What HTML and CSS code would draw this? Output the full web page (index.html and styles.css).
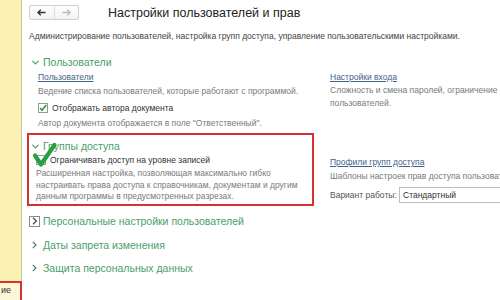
FILE: index.html
```html
<!DOCTYPE html>
<html lang="ru">
<head>
<meta charset="utf-8">
<title>Настройки пользователей и прав</title>
<link rel="stylesheet" href="styles.css">
</head>
<body>
<div class="app">
  <aside class="sidebar">
    <div class="side-item">ие</div>
  </aside>
  <main class="main">
    <header class="topbar">
      <div class="nav">
        <span class="nav-btn"><svg width="9" height="7" viewBox="0 0 9 7"><path d="M8.5 3.5H1.2M3.8 0.8L1 3.5l2.8 2.7" fill="none" stroke="#333" stroke-width="1.4"/></svg></span>
        <span class="nav-btn"><svg width="9" height="7" viewBox="0 0 9 7"><path d="M0.5 3.5h7.3M5.2 0.8L8 3.5 5.2 6.2" fill="none" stroke="#bbb" stroke-width="1.4"/></svg></span>
      </div>
      <h1 class="title">Настройки пользователей и прав</h1>
    </header>
    <p class="intro">Администрирование пользователей, настройка групп доступа, управление пользовательскими настройками.</p>

    <section class="group">
      <div class="group-head"><svg class="chev-down" width="7" height="5" viewBox="0 0 7 5"><path d="M0.5 0.8L3.5 3.8 6.5 0.8" fill="none" stroke="#4a9e6c" stroke-width="1.2"/></svg>Пользователи</div>
      <div class="cols">
        <div class="col-left">
          <a class="link">Пользователи</a>
          <p class="note">Ведение списка пользователей, которые работают с программой.</p>
          <label class="check"><span class="box"><svg width="10" height="10" viewBox="0 0 10 10"><path d="M2 5l2 2.3L8.2 2" fill="none" stroke="#2f9a47" stroke-width="1.6"/></svg></span>Отображать автора документа</label>
          <p class="note note-after">Автор документа отображается в поле "Ответственный".</p>
        </div>
        <div class="col-right">
          <a class="link">Настройки входа</a>
          <p class="note note-tall">Сложность и смена паролей, ограничение<br>пользователей.</p>
        </div>
      </div>
    </section>

    <section class="cols group-row">
      <div class="col-left marked">
        <div class="group-head"><svg class="chev-down" width="7" height="5" viewBox="0 0 7 5"><path d="M0.5 0.8L3.5 3.8 6.5 0.8" fill="none" stroke="#4a9e6c" stroke-width="1.2"/></svg>Группы доступа</div>
        <div class="inner">
          <label class="check check-tight"><span class="box"></span>Ограничивать доступ на уровне записей</label>
          <p class="note note-block">Расширенная настройка, позволяющая максимально гибко<br>настраивать права доступа к справочникам, документам и другим<br>данным программы в предусмотренных разрезах.</p>
        </div>
        <svg class="big-check" width="26" height="28" viewBox="0 0 26 28"><path d="M3 14.5l6 9L22.5 4" fill="none" stroke="#25a043" stroke-width="4.2" stroke-linecap="round" stroke-linejoin="round"/></svg>
      </div>
      <div class="col-right col-right-low">
        <a class="link">Профили групп доступа</a>
        <p class="note">Шаблоны настроек прав доступа пользователей.</p>
        <div class="field-row"><span class="field-label">Вариант работы:</span><span class="field">Стандартный</span></div>
      </div>
    </section>

    <div class="group-head collapsed first-collapsed"><span class="boxed"><svg width="6" height="8" viewBox="0 0 6 8"><path d="M1 0.8L4.4 4 1 7.2" fill="none" stroke="#444" stroke-width="1.2"/></svg></span>Персональные настройки пользователей</div>
    <div class="group-head collapsed"><svg class="chev-right" width="5" height="8" viewBox="0 0 5 8"><path d="M0.8 0.8L4 4 0.8 7.2" fill="none" stroke="#4d7d63" stroke-width="1.2"/></svg>Даты запрета изменения</div>
    <div class="group-head collapsed"><svg class="chev-right" width="5" height="8" viewBox="0 0 5 8"><path d="M0.8 0.8L4 4 0.8 7.2" fill="none" stroke="#4d7d63" stroke-width="1.2"/></svg>Защита персональных данных</div>
  </main>
</div>
</body>
</html>
```

FILE: styles.css
```css
* { box-sizing: border-box; }
html, body {
  margin: 0;
  padding: 0;
  width: 500px;
  height: 300px;
  overflow: hidden;
  background: #fff;
  font-family: "Liberation Sans", Arial, sans-serif;
  color: #444;
}
.app {
  display: flex;
  height: 300px;
}
.sidebar {
  width: 22px;
  flex: none;
  background: #fbf1b3;
  border-right: 1px solid #cfc7a0;
  display: flex;
  flex-direction: column;
  justify-content: flex-end;
}
.side-item {
  height: 21px;
  margin-right: -1px;
  margin-bottom: -2px;
  border: 2px solid #d63232;
  border-left: none;
  background: #fdf7d8;
  font-size: 9px;
  line-height: 15px;
  padding-left: 1px;
  color: #333;
}
.main {
  flex: 1;
  min-width: 0;
  padding: 5px 0 0 5px;
  white-space: nowrap;
}
.topbar {
  display: flex;
  align-items: center;
  height: 15px;
}
.nav {
  display: flex;
  margin-left: 2px;
  width: 50px;
  height: 15px;
  border: 1px solid #d0d0d0;
  border-radius: 2px;
  background: linear-gradient(#fff, #f3f3f3);
}
.nav-btn {
  flex: 1;
  display: flex;
  align-items: center;
  justify-content: center;
}
.nav-btn + .nav-btn { border-left: 1px solid #dcdcdc; }
.title {
  margin: 0 0 0 29px;
  font-size: 12.5px;
  font-weight: normal;
  color: #222;
  line-height: 15px;
  position: relative;
  top: 1px;
}
.intro {
  margin: 10px 0 0 2px;
  font-size: 8.5px;
  line-height: 12px;
  color: #444;
}
.group-head {
  display: flex;
  align-items: center;
  height: 14px;
  font-size: 10.5px;
  color: #4a9e6c;
  padding-left: 5px;
}
.group > .group-head { margin-top: 13px; }
.chev-down { margin-right: 4px; flex: none; }
.chev-right { margin-right: 6px; margin-left: 0; flex: none; }
.cols {
  display: flex;
  gap: 16px;
}
.col-left {
  width: 287px;
  flex: none;
  padding-left: 9px;
  border: 2px solid transparent;
  border-top: none;
  border-bottom: none;
}
.group .cols { margin-top: 2px; }
.group .col-right { padding-left: 0; }
.link {
  display: block;
  font-size: 8.5px;
  line-height: 12px;
  color: #3f5f8c;
  text-decoration: underline;
  text-underline-offset: 1px;
}
.note {
  margin: 2px 0 0;
  font-size: 8.5px;
  line-height: 12px;
  color: #7a7a7a;
}
.note-tall { line-height: 13px; margin-top: 1px; }
.note-after { margin-top: 3px; }
.check {
  display: flex;
  align-items: center;
  height: 12px;
  margin-top: 5px;
  font-size: 8.5px;
  color: #333;
}
.box {
  width: 10px;
  height: 10px;
  flex: none;
  border: 1px solid #9a9a9a;
  background: #fff;
  margin-right: 4px;
  display: flex;
  align-items: center;
  justify-content: center;
}
.box svg { margin: -1px; }
.group-row { margin-top: 4px; }
.marked {
  position: relative;
  border: 2px solid #d63232;
  padding: 4px 0 1px 0;
  height: 73px;
}
.marked .group-head { padding-left: 3px; }
.inner { padding-left: 7px; }
.check-tight { margin-top: 1px; }
.note-block { margin-top: 2px; line-height: 11.5px; }
.big-check {
  position: absolute;
  left: 3px;
  top: 6px;
}
.col-right-low { padding-top: 23px; }
.field-row {
  display: flex;
  align-items: center;
  margin-top: 5px;
  font-size: 8.5px;
}
.field-label { color: #555; width: 69px; flex: none; }
.field {
  height: 16px;
  width: 120px;
  border: 1px solid #bdbdbd;
  padding: 0 3px;
  line-height: 14px;
  color: #333;
  flex: none;
}
.collapsed { padding-left: 2px; }
.first-collapsed { margin-top: 8px; }
.collapsed + .collapsed { margin-top: 9.5px; padding-left: 5px; }
.boxed {
  width: 11px;
  height: 11px;
  border: 1px solid #8a8a8a;
  display: flex;
  align-items: center;
  justify-content: center;
  margin-right: 3px;
  flex: none;
}
```
